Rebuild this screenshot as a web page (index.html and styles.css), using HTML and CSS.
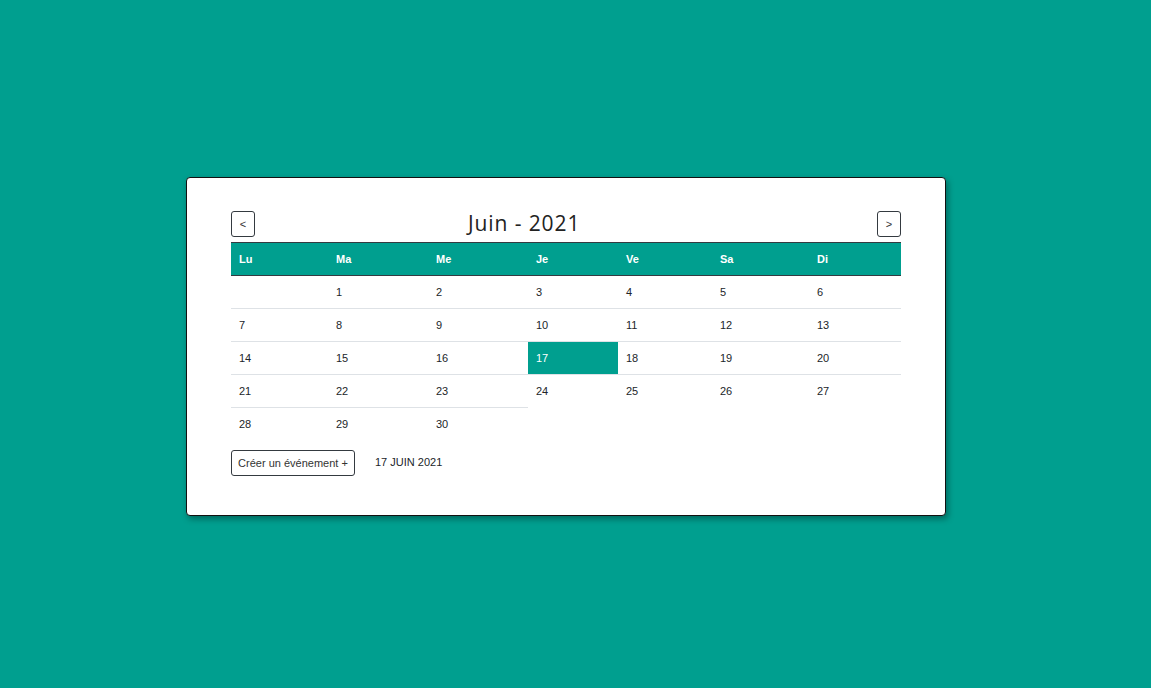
FILE: index.html
```html
<!DOCTYPE html>
<html lang="fr">
<head>
<meta charset="utf-8">
<title>Calendrier</title>
<link rel="stylesheet" href="styles.css">
</head>
<body>
<div class="card">
  <div class="cal-header">
    <button class="nav-btn">&lt;</button>
    <h1 class="title">Juin - 2021</h1>
    <button class="nav-btn">&gt;</button>
  </div>
  <table class="cal">
    <colgroup>
      <col class="c1"><col class="c2"><col class="c3"><col class="c4"><col class="c5"><col class="c6"><col class="c7">
    </colgroup>
    <thead>
      <tr><th>Lu</th><th>Ma</th><th>Me</th><th>Je</th><th>Ve</th><th>Sa</th><th>Di</th></tr>
    </thead>
    <tbody>
      <tr><td></td><td>1</td><td>2</td><td>3</td><td>4</td><td>5</td><td>6</td></tr>
      <tr><td>7</td><td>8</td><td>9</td><td>10</td><td>11</td><td>12</td><td>13</td></tr>
      <tr><td>14</td><td>15</td><td>16</td><td class="today">17</td><td>18</td><td>19</td><td>20</td></tr>
      <tr><td>21</td><td>22</td><td>23</td><td>24</td><td>25</td><td>26</td><td>27</td></tr>
      <tr><td>28</td><td>29</td><td>30</td></tr>
    </tbody>
  </table>
  <div class="cal-footer">
    <button class="create-btn">Créer un événement +</button>
    <span class="selected">17 JUIN 2021</span>
  </div>
</div>
</body>
</html>
```
FILE: styles.css
```css
html, body {
  margin: 0;
  padding: 0;
}
body {
  background: #009f8f;
  height: 688px;
  font-family: "Liberation Sans", Arial, sans-serif;
  color: #212529;
}
.card {
  box-sizing: border-box;
  width: 760px;
  height: 339px;
  margin: 177px 0 0 186px;
  background: #fff;
  border: 1px solid #111;
  border-radius: 4px;
  box-shadow: 2px 3px 6px rgba(0, 0, 0, 0.35);
  padding: 33px 44px 0 44px;
}
.cal-header {
  display: flex;
  align-items: center;
  height: 26px;
  margin-bottom: 5px;
}
.nav-btn {
  box-sizing: border-box;
  width: 24px;
  height: 26px;
  padding: 0;
  background: #fff;
  border: 1px solid #343a40;
  border-radius: 3px;
  font-family: "Liberation Sans", Arial, sans-serif;
  font-size: 11px;
  color: #333;
  line-height: 1;
}
.title {
  flex: 1;
  margin: 0 0 0 213px;
  font-family: "Open Sans", sans-serif;
  font-weight: 400;
  font-size: 21px;
  letter-spacing: 0.9px;
  color: #222;
  line-height: 26px;
  position: relative;
  top: -1px;
}
.cal {
  width: 670px;
  border-collapse: collapse;
  table-layout: fixed;
  font-size: 11px;
}
.c1 { width: 97px; }
.c2 { width: 100px; }
.c3 { width: 100px; }
.c4 { width: 90px; }
.c5 { width: 94px; }
.c6 { width: 97px; }
.c7 { width: 92px; }
.cal th {
  background: #009f8f;
  color: #fff;
  font-weight: 700;
  text-align: left;
  height: 33px;
  padding: 0 8px;
  line-height: 16px;
  border-top: 1px solid #343a40;
  border-bottom: 1px solid #343a40;
  box-sizing: border-box;
}
.cal td {
  text-align: left;
  padding: 8px 8px;
  line-height: 16px;
  height: 16px;
  border-top: 1px solid #dee2e6;
}
.cal td.today {
  background: #009f8f;
  color: #fff;
}
.cal-footer {
  display: flex;
  align-items: center;
  margin-top: 10px;
}
.create-btn {
  box-sizing: border-box;
  width: 124px;
  height: 26px;
  padding: 0;
  background: #fff;
  border: 1px solid #343a40;
  border-radius: 3px;
  font-family: "Liberation Sans", Arial, sans-serif;
  font-size: 11px;
  color: #333;
}
.selected {
  margin-left: 20px;
  font-size: 11px;
  position: relative;
  top: -1px;
}
```
